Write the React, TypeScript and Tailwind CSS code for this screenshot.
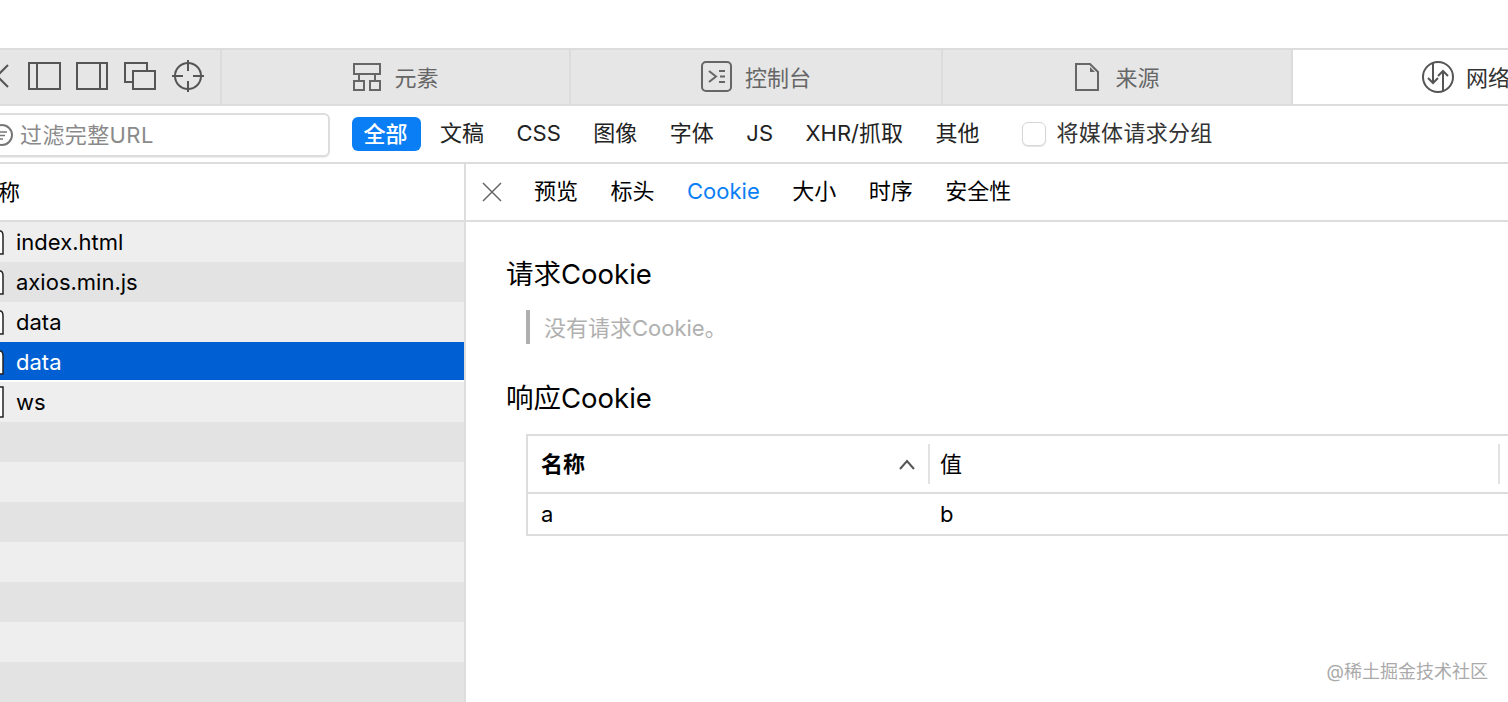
const stack = "font-['Inter','Noto_Sans_CJK_SC',sans-serif]";

function ToolbarIcons() {
  return (
    <div className="flex h-full w-[220px] shrink-0 items-center text-[#555]">
      <svg width="220" height="54" viewBox="0 0 220 54" fill="none" stroke="currentColor" strokeWidth="2">
        {/* close */}
        <path d="M8 15 L-3 26 L8 37" />
        {/* dock left */}
        <rect x="29" y="13" width="31" height="26" />
        <path d="M37 13 V39" />
        {/* dock right */}
        <rect x="77" y="13" width="30" height="26" />
        <path d="M100 13 V39" />
        {/* undock */}
        <path d="M132 32 H125 V13 H147 V21" />
        <rect x="133" y="21" width="22" height="18" />
        {/* target */}
        <circle cx="188" cy="26" r="13" />
        <path d="M188 10 V21 M188 31 V42 M172 26 H183 M193 26 H204" />
      </svg>
    </div>
  );
}

function ElementsIcon() {
  return (
    <svg width="28" height="28" viewBox="0 0 28 28" fill="none" stroke="#666" strokeWidth="2">
      <rect x="1" y="1" width="26" height="10" />
      <path d="M6 11 V18 M22 11 V18" />
      <rect x="1" y="18" width="10" height="9" />
      <rect x="17" y="18" width="10" height="9" />
    </svg>
  );
}

function ConsoleIcon() {
  return (
    <svg width="32" height="32" viewBox="0 0 32 32" fill="none" stroke="#666" strokeWidth="2">
      <rect x="1" y="1" width="29" height="29" rx="4" />
      <path d="M8 10 L15 15.5 L8 21" />
      <path d="M18 10 H24 M19 15.5 H24 M18 21 H24" />
    </svg>
  );
}

function SourceIcon() {
  return (
    <svg width="24" height="28" viewBox="0 0 24 28" fill="none" stroke="#666" strokeWidth="2">
      <path d="M1 1 H15 L23 9 V27 H1 Z" />
      <path d="M15 4 V9 H20 Z" fill="#666" stroke="none" />
    </svg>
  );
}

function NetworkIcon() {
  return (
    <svg width="32" height="32" viewBox="0 0 32 32" fill="none" stroke="#555" strokeWidth="2">
      <circle cx="16" cy="16" r="15" />
      <path d="M11 1 V22 M6 17 L11 22 L16 17" />
      <path d="M21 31 V10 M16 15 L21 10 L26 15" />
    </svg>
  );
}

function FileIcon({ tall }: { tall?: boolean }) {
  if (tall) {
    return (
      <svg width="4" height="32" viewBox="0 0 4 32" fill="none" className="shrink-0">
        <path d="M-3 1 H3 V31 H-3 Z" fill="#fff" stroke="#222" strokeWidth="1.5" />
      </svg>
    );
  }
  return (
    <svg width="4" height="25" viewBox="0 0 4 25" fill="none" className="shrink-0">
      <path d="M-3 1 H0 C2 1 3 3 3 6 V24 H-3 Z" fill="#fff" stroke="#222" strokeWidth="1.5" />
    </svg>
  );
}

const filters = ["文稿", "CSS", "图像", "字体", "JS", "XHR/抓取", "其他"];
const detailTabs = ["预览", "标头", "Cookie", "大小", "时序", "安全性"];
const files = ["index.html", "axios.min.js", "data", "data", "ws"];
const rowIndexes = [0, 1, 2, 3, 4, 5, 6, 7, 8, 9, 10, 11];

function Tab({ width, icon, label, gap, active }: { width: string; icon: React.ReactNode; label: string; gap: string; active?: boolean }) {
  return (
    <div className={`flex h-full shrink-0 items-center justify-center border-r-2 border-[#dcdcdc] ${width} ${gap} ${active ? "bg-white" : ""}`}>
      {icon}
      <span className={`pt-[2px] text-[22px] ${active ? "text-[#333]" : "text-[#666]"}`}>{label}</span>
    </div>
  );
}

export default function App() {
  return (
    <div className={`${stack} relative h-[702px] w-[1508px] overflow-hidden bg-white text-[22px] text-black`}>
      <div className="h-12" />
      {/* tool tabs */}
      <div className="flex h-[58px] border-y-2 border-[#dcdcdc] bg-[#e6e6e6]">
        <div className="h-full shrink-0 border-r-2 border-[#dcdcdc]">
          <ToolbarIcons />
        </div>
        <Tab width="w-[349px] pl-[1px]" gap="gap-[13px]" icon={<ElementsIcon />} label="元素" />
        <Tab width="w-[372px]" gap="gap-3" icon={<ConsoleIcon />} label="控制台" />
        <Tab width="w-[350px] pl-[1px]" gap="gap-4" icon={<SourceIcon />} label="来源" />
        <Tab width="w-[348px]" gap="gap-3" active icon={<NetworkIcon />} label="网络" />
      </div>

      {/* filter bar */}
      <div className="flex h-[58px] items-center border-b-2 border-[#dcdcdc] leading-none">
        <div className="mt-[1px] -ml-3 flex h-[44px] w-[342px] shrink-0 items-center gap-[7px] rounded-md border-2 border-[#dddddd] bg-white pl-[2px] text-[#8a8a8a] shadow-[0_1px_1px_#eee]">
          <svg width="21" height="24" viewBox="0 0 21 24" fill="none" stroke="#777" strokeWidth="2" className="shrink-0">
            <circle cx="10" cy="12" r="10" />
            <path d="M5 9 H15 M5 12.5 H13 M7 16 H11" strokeWidth="1.5" />
          </svg>
          <span className="tracking-[0.4px]">过滤完整URL</span>
        </div>
        <div className="ml-[22px] flex h-[34px] w-[69px] shrink-0 items-center justify-center rounded-md bg-[#0a7ff5] pr-[2px] font-medium text-white">全部</div>
        <div className="ml-[19px] flex items-center gap-[32.5px] pb-[3px] text-[#222]">
          {filters.map((f) => (
            <span key={f}>{f}</span>
          ))}
        </div>
        <div className="ml-[42px] h-6 w-6 shrink-0 rounded-md border border-[#d6d6d6] bg-white shadow-[0_1px_1px_#e5e5e5]" />
        <span className="ml-[11px] pb-[3px] tracking-[0.3px] text-[#333]">将媒体请求分组</span>
      </div>

      <div className="flex">
        {/* request list */}
        <div className="w-[466px] shrink-0 border-r-2 border-[#dddddd]">
          <div className="flex h-[58px] items-center border-b-2 border-[#dddddd]">
            <span className="-ml-[2px]">称</span>
          </div>
          {rowIndexes.map((i) => {
            const name = files[i];
            const selected = i === 3;
            const bg = selected ? "bg-[#005fd3] text-white" : i % 2 === 0 ? "bg-[#eeeeee]" : "bg-[#e3e3e3]";
            return (
              <div key={i} className={`flex items-center ${selected ? "mb-[2px] h-[38px] pt-[2px]" : "h-10"} ${bg}`}>
                {name && (
                  <>
                    <FileIcon tall={name === "ws"} />
                    <span className="ml-3">{name}</span>
                  </>
                )}
              </div>
            );
          })}
        </div>

        {/* detail pane */}
        <div className="min-w-0 flex-1">
          <div className="flex h-[58px] items-center border-b-2 border-[#dddddd] pl-4">
            <svg width="20" height="20" viewBox="0 0 20 20" fill="none" stroke="#666" strokeWidth="1.5" className="shrink-0">
              <path d="M1 1 L19 19 M19 1 L1 19" />
            </svg>
            <div className="ml-8 flex items-center gap-[32.5px] pb-[2px]">
              {detailTabs.map((t) => (
                <span key={t} className={t === "Cookie" ? "text-[#0a7ff5]" : ""}>{t}</span>
              ))}
            </div>
          </div>

          <div className="pl-10">
            <h2 className="mt-[34px] text-[27.5px] leading-9">请求Cookie</h2>
            <div className="mt-[18px] ml-5 flex h-[34px] items-center border-l-4 border-[#b0b0b0] pt-[2px] pl-[14px] text-[#b0b0b0]">
              没有请求Cookie。
            </div>
            <h2 className="mt-9 text-[27.5px] leading-9">响应Cookie</h2>
            <div className="mt-[18px] ml-5 w-[1100px] border-2 border-[#dddddd]">
              <div className="flex h-[56px] items-center">
                <div className="flex h-10 w-[402px] shrink-0 items-center justify-between border-r-2 border-[#e2e2e2] px-[13px] font-semibold">
                  <span>名称</span>
                  <svg width="16" height="11" viewBox="0 0 16 11" fill="none" stroke="#555" strokeWidth="2">
                    <path d="M1 10 L8 2 L15 10" />
                  </svg>
                </div>
                <div className="flex h-10 w-[570px] shrink-0 items-center border-r-2 border-[#e2e2e2] pl-[10px]">值</div>
              </div>
              <div className="flex h-[42px] items-center border-t-2 border-[#dddddd]">
                <div className="w-[402px] shrink-0 pl-[13px]">a</div>
                <div className="pl-[10px]">b</div>
              </div>
            </div>
          </div>
        </div>
      </div>

      {/* watermark */}
      <div className="absolute right-5 bottom-[18px] text-[18px] leading-6 text-[#aaaaaa]">@稀土掘金技术社区</div>
    </div>
  );
}
